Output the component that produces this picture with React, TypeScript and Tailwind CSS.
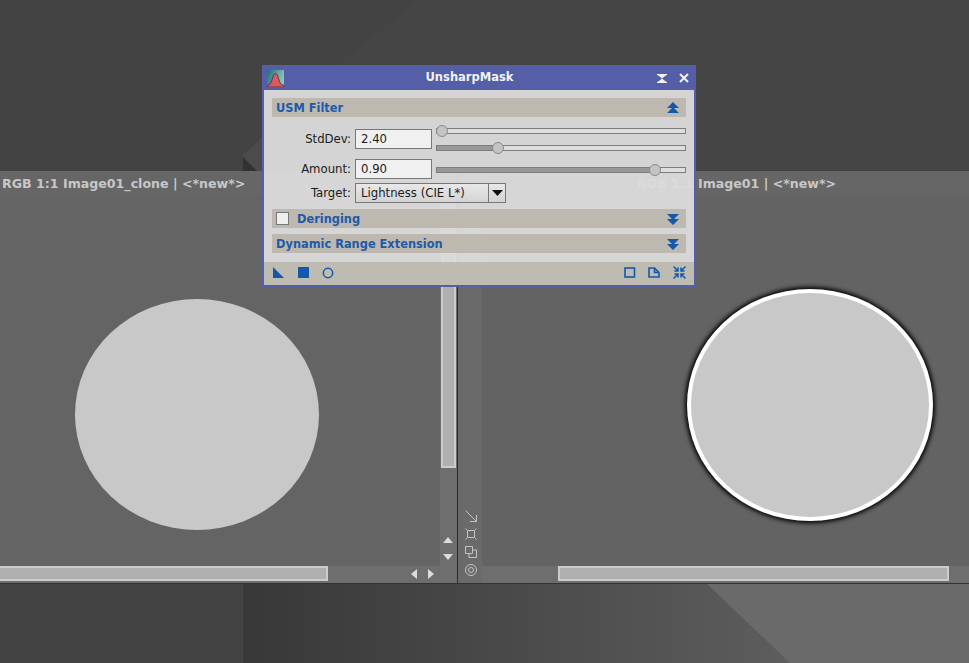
const sans = { fontFamily: '"DejaVu Sans", sans-serif' };

function Slider({ pos, fill }: { pos: number; fill?: boolean }) {
  return (
    <div className="relative h-[6px] w-[250px] border border-[#7d7d7d] bg-[#dedede]">
      {fill && <div className="h-full bg-[#989898]" style={{ width: pos }} />}
      <div
        className="absolute top-[-4px] h-[12px] w-[12px] rounded-full border border-[#8c8c8c] bg-[#c4c4c4]"
        style={{ left: pos - 6 }}
      />
    </div>
  );
}

function Chevrons({ up }: { up?: boolean }) {
  return (
    <svg width="12" height="12" viewBox="0 0 12 12" className={up ? "" : "rotate-180"}>
      <path d="M0 6 L6 0 L12 6 Z M0 11 L6 5 L12 11 Z" fill="#1458ac" />
    </svg>
  );
}

function Section({ title, up, check }: { title: string; up?: boolean; check?: boolean }) {
  return (
    <div className="flex h-[19px] items-center justify-between bg-[#bdb9b0] pl-[4px] pr-[7px]">
      <div className="flex items-center">
        {check && <div className="mr-[8px] h-[13px] w-[13px] border border-[#777] bg-[#efefef]" />}
        <span className="mt-[2px] text-[11.4px] font-bold leading-none text-[#1e5aa8]">{title}</span>
      </div>
      <Chevrons up={up} />
    </div>
  );
}

function Dialog() {
  return (
    <div
      className="absolute left-[262px] top-[65px] flex h-[222px] w-[434px] flex-col border-2 border-t-0 border-[#545fa8] bg-[#dcdcdc]/95 text-[#1c1c1c]"
      style={sans}
    >
      <div className="relative flex h-[25px] shrink-0 items-center justify-center bg-[#545fa8] pr-[19px] text-[11.5px] font-bold text-[#f2f2f2]">
        <svg width="17" height="17" viewBox="0 0 17 17" className="absolute left-[3px] top-[5px]">
          <defs>
            <linearGradient id="lg" x1="0" y1="0" x2="1" y2="0.4">
              <stop offset="0" stopColor="#1f6a7a" />
              <stop offset="1" stopColor="#8fc4b8" />
            </linearGradient>
          </defs>
          <rect width="17" height="17" fill="url(#lg)" />
          <path d="M0 15.5 L3 14 C5.5 11 6 3.5 8.5 3.5 C11 3.5 11.5 11 14 14 L17 15.5 V17 H0 Z" fill="#dc5a5c" stroke="#2a2438" strokeWidth="0.7" />
        </svg>
        <span className="mt-[1px]">UnsharpMask</span>
        <svg width="10" height="9" viewBox="0 0 10 9" className="absolute right-[27px] top-[9px]">
          <path d="M0 0 H10 V1.2 H0 Z M0 7.8 H10 V9 H0 Z M1 1.2 H9 L5 4.5 Z M1 7.8 H9 L5 4.5 Z" fill="#f2f2f2" />
        </svg>
        <svg width="10" height="10" viewBox="0 0 10 10" className="absolute right-[5px] top-[8px]">
          <path d="M1 1 L9 9 M9 1 L1 9" stroke="#f2f2f2" strokeWidth="2" />
        </svg>
      </div>

      <div className="flex flex-1 flex-col px-[8px] pt-[8px] text-[11.7px]">
        <Section title="USM Filter" up />

        <div className="mt-[10px] flex h-[24px] items-center">
          <span className="w-[83px] pr-[4px] pt-[2px] text-right">StdDev:</span>
          <div className="flex h-[20px] w-[77px] items-center border border-[#777] bg-[#f0f0f0] pl-[5px] pt-[2px]">2.40</div>
          <div className="ml-[4px] flex flex-col gap-[11px]">
            <Slider pos={5} />
            <Slider pos={61} fill />
          </div>
        </div>

        <div className="mt-[8px] flex h-[20px] items-center">
          <span className="w-[83px] pr-[4px] pt-[2px] text-right">Amount:</span>
          <div className="flex h-[20px] w-[77px] items-center border border-[#777] bg-[#f0f0f0] pl-[5px] pt-[2px]">0.90</div>
          <div className="ml-[4px] pt-[2px]">
            <Slider pos={218} fill />
          </div>
        </div>

        <div className="mt-[4px] flex h-[20px] items-center">
          <span className="w-[83px] pr-[4px] pt-[2px] text-right">Target:</span>
          <div className="flex h-[20px] w-[151px] items-center border border-[#777] bg-gradient-to-b from-[#e8e8e8] to-[#d4d4d4]">
            <span className="flex-1 pl-[5px] pt-[2px]">Lightness (CIE L*)</span>
            <div className="flex h-full w-[17px] items-center justify-center border-l border-[#777]">
              <svg width="11" height="6" viewBox="0 0 11 6"><path d="M0 0 H11 L5.5 6 Z" fill="#111" /></svg>
            </div>
          </div>
        </div>

        <div className="mt-[6px]"><Section title="Deringing" check /></div>
        <div className="mt-[6px]"><Section title="Dynamic Range Extension" /></div>
      </div>

      <div className="flex h-[23px] shrink-0 items-center justify-between bg-[#bdb9b0]/95 pb-[2px] pl-[9px] pr-[8px]">
        <div className="flex items-center gap-[13px]">
          <svg width="12" height="11" viewBox="0 0 12 11"><path d="M0 0 L11 11 H0 Z" fill="#1458ac" /></svg>
          <div className="h-[11px] w-[11px] bg-[#1458ac]" />
          <svg width="12" height="12" viewBox="0 0 12 12"><circle cx="6" cy="6" r="4.7" fill="none" stroke="#1458ac" strokeWidth="1.5" /></svg>
        </div>
        <div className="flex items-center gap-[12px]">
          <svg width="12" height="11" viewBox="0 0 12 11"><rect x="1" y="1" width="9.5" height="9" fill="none" stroke="#1458ac" strokeWidth="1.6" /></svg>
          <svg width="12" height="11" viewBox="0 0 12 11"><path d="M1 1 H6.5 L11 5.5 V10 H1 Z M6.5 1 V5.5 H11" fill="none" stroke="#1458ac" strokeWidth="1.6" /></svg>
          <svg width="13" height="13" viewBox="0 0 13 13" className="ml-[1px]"><path d="M0.5 0.5 L5 5 M5 1.5 V5 H1.5 M12.5 0.5 L8 5 M8 1.5 V5 H11.5 M0.5 12.5 L5 8 M5 11.5 V8 H1.5 M12.5 12.5 L8 8 M8 11.5 V8 H11.5" fill="none" stroke="#1458ac" strokeWidth="1.5" /></svg>
        </div>
      </div>
    </div>
  );
}

function TitleBar({ text }: { text: string }) {
  return (
    <div className="flex h-[26px] shrink-0 items-center whitespace-nowrap bg-[#666666] text-[12.6px] font-bold text-[#c8c8c8]">
      {text}
    </div>
  );
}

function Tri({ d, className }: { d: string; className?: string }) {
  return (
    <svg width="12" height="8" viewBox="0 0 12 8" className={className}>
      <path d={d} fill="#dcdcdc" />
    </svg>
  );
}

function LeftWindow() {
  return (
    <div className="flex w-[457px] shrink-0 flex-col" style={sans}>
      <div className="bg-[#666666] pl-[2px]"><TitleBar text="RGB 1:1 Image01_clone | <*new*>" /></div>
      <div className="flex min-h-0 flex-1">
        <div className="flex flex-1 items-start bg-[#646464] pl-[75px] pt-[102px]">
          <div className="h-[231px] w-[244px] rounded-[50%] bg-[#c8c8c8]" />
        </div>
        <div className="flex w-[17px] flex-col items-center bg-[#6e6e6e] pr-[1px]">
          <div className="h-[271px] w-[15px] shrink-0 border-2 border-[#cccccc] bg-[#b0b0b0]" />
          <Tri d="M6 1 L11 7 H1 Z" className="mt-[68px]" />
          <Tri d="M1 1 H11 L6 7 Z" className="mt-[9px]" />
        </div>
      </div>
      <div className="flex h-[17px] shrink-0 items-start bg-[#6e6e6e]">
        <div className="h-[15px] w-[328px] border-2 border-l-0 border-[#cccccc] bg-[#b0b0b0]" />
        <svg width="8" height="10" viewBox="0 0 8 10" className="ml-[82px] mt-[3px]"><path d="M7 0 V10 L1 5 Z" fill="#dcdcdc" /></svg>
        <svg width="8" height="10" viewBox="0 0 8 10" className="ml-[9px] mt-[3px]"><path d="M1 0 V10 L7 5 Z" fill="#dcdcdc" /></svg>
      </div>
    </div>
  );
}

function RightWindow() {
  return (
    <div className="flex min-w-0 flex-1 flex-col" style={sans}>
      <div className="bg-[#666666] pl-[179px]"><TitleBar text="RGB 1:1 Image01 | <*new*>" /></div>
      <div className="flex min-h-0 flex-1">
        <div className="flex w-[24px] shrink-0 flex-col items-center gap-[4px] bg-[#6a6a6a] pb-[6px] pl-[1px]">
          <div className="mb-auto mt-[-20px] flex h-[95px] w-[22px] items-center justify-center bg-[#767676] text-[10px] text-[#9a9a9a] [writing-mode:vertical-rl]">
            Image01
          </div>
          <svg width="14" height="14" viewBox="0 0 14 14" fill="none" stroke="#c4c4c4"><path d="M1.5 1.5 L12 12 M12.5 6 V12.5 H6" /></svg>
          <svg width="14" height="14" viewBox="0 0 14 14" fill="none" stroke="#c4c4c4"><path d="M3.5 3.5 H10.5 V10.5 H3.5 Z M1.5 1.5 L3.5 3.5 M12.5 1.5 L10.5 3.5 M1.5 12.5 L3.5 10.5 M12.5 12.5 L10.5 10.5" /></svg>
          <svg width="14" height="14" viewBox="0 0 14 14" fill="none" stroke="#c4c4c4"><path d="M1.5 1.5 H8.5 V8.5 H1.5 Z M8.5 5 H12.5 V12.5 H5 V8.5" /></svg>
          <svg width="14" height="14" viewBox="0 0 14 14" fill="none" stroke="#c4c4c4"><circle cx="7" cy="7" r="5.5" /><circle cx="7" cy="7" r="2.5" /></svg>
        </div>
        <div className="flex min-w-0 flex-1 flex-col">
          <div className="flex min-h-0 flex-1 items-start bg-[#636363] pl-[205px] pt-[92px]">
            <div className="flex h-[232px] w-[246px] shrink-0 items-center justify-center rounded-[50%] bg-white shadow-[0_0_4px_2px_#000000]">
              <div className="h-[224px] w-[238px] rounded-[50%] bg-[#c8c8c8]" />
            </div>
          </div>
          <div className="flex h-[17px] shrink-0 items-start bg-[#6e6e6e] pl-[76px]">
            <div className="h-[15px] w-[391px] border-2 border-[#cccccc] bg-[#b0b0b0]" />
          </div>
        </div>
      </div>
    </div>
  );
}

export default function App() {
  return (
    <div className="relative flex h-[663px] w-[969px] flex-col overflow-hidden bg-[#434343]">
      <div className="relative h-[171px] shrink-0">
        <svg width="969" height="171" viewBox="0 0 969 171" className="absolute left-0 top-0">
          <path d="M418 0 L262 125 V171 H969 V0 Z" fill="#454545" />
          <path d="M243 155 L262 137 V171 H243 Z" fill="#4b4b4b" />
          <path d="M243 157 L257 171 H243 Z" fill="#323232" />
        </svg>
      </div>
      <div className="flex h-[413px] shrink-0 border-b border-[#333]">
        <LeftWindow />
        <div className="w-[1px] shrink-0 bg-[#2a2a2a]" />
        <RightWindow />
      </div>
      <div className="flex flex-1">
        <div className="w-[243px] shrink-0 bg-[#434343]" />
        <div className="relative flex-1 bg-gradient-to-r from-[#383838] to-[#6a6a6a]">
          <svg width="290" height="79" viewBox="0 0 290 79" className="absolute right-0 top-0">
            <path d="M28 0 H290 V79 H111 Z" fill="#6a6a6a" />
          </svg>
        </div>
      </div>
      <Dialog />
    </div>
  );
}
